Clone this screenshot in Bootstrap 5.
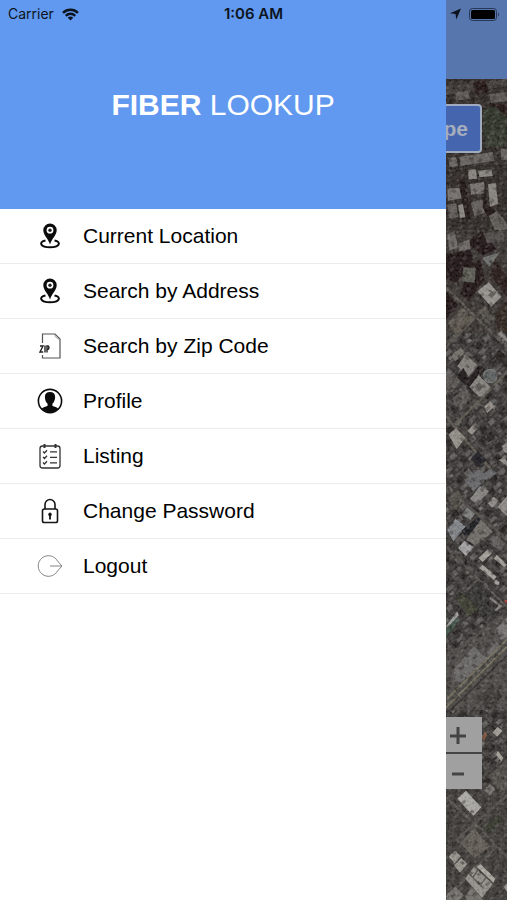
<!DOCTYPE html>
<html lang="en">
<head>
<meta charset="utf-8">
<meta name="viewport" content="width=device-width, initial-scale=1">
<title>Fiber Lookup</title>
<link href="https://cdn.jsdelivr.net/npm/bootstrap@5.3.0/dist/css/bootstrap.min.css" rel="stylesheet">
<style>
body { font-family: "Liberation Sans", Arial, sans-serif; }
.status-bar { font: 14px/28px Inter, "Liberation Sans", sans-serif; color: #0c1420; padding: 0 8px; }
.status-bar .clock { font-size: 15px; font-weight: 600; }
.status-bar .side { flex: 1 1 0; }
.drawer { width: 88%; }
.brand { height: 209px; background: #6199f0; }
.brand-title { font-size: 30px; line-height: 36px; font-weight: 400; }
.menu-item { height: 55px; padding: 0 20px 0 36px; gap: 19px; font-size: 21px; line-height: 28px; color: #000; background: #fff; border-color: #ececec; }
.drawer .menu-item:last-child { border-bottom: 1px solid #ececec; }
.menu-item svg { width: 28px; height: 28px; flex: none; }
.behind { background: #393735; }
.behind-nav { height: 79px; background: #5676ad; flex: none; }
.map { min-height: 0; }
.type-btn { top: 104px; right: 25px; height: 49px; padding: 0 12px; font-size: 21px; font-weight: 700; line-height: 28px; color: #a6aebd; background: #4566ae; border: 2px solid #a1abc0; border-radius: 4px; }
.zoom-ctl { right: 25px; bottom: 111px; width: 48px; gap: 2px; background: #444; }
.zoom-ctl button { height: 35px; background: #a0a0a0; color: #444; border: 0; }
</style>
</head>
<body>
<div class="position-relative d-flex min-vh-100 overflow-hidden">
  <header class="status-bar position-absolute top-0 start-0 w-100 d-flex align-items-center z-3">
    <div class="side d-flex align-items-center gap-2">
      <span>Carrier</span>
      <svg width="17" height="13" viewBox="0 0 17 13" aria-hidden="true"><g fill="none" stroke="#0c1420" stroke-width="2.500"><path d="M1 4.900a10.600 10.600 0 0 1 15 0"/><path d="M3.800 7.800a6.700 6.700 0 0 1 9.400 0"/></g><path d="M8.500 12.600 5.700 9.800a4 4 0 0 1 5.600 0z" fill="#0c1420"/></svg>
    </div>
    <span class="clock">1:06 AM</span>
    <div class="side d-flex align-items-center justify-content-end gap-2">
      <svg width="12" height="12" viewBox="0 0 12 12" aria-hidden="true"><path d="M12 .5 7.300 11.500 6.500 6 1 5.200z" fill="#0c1420"/></svg>
      <svg width="30" height="13" viewBox="0 0 30 13" aria-hidden="true"><rect x=".5" y=".5" width="27" height="12" rx="3" fill="none" stroke="#263855"/><rect x="2" y="2" width="24" height="9" rx="1.500" fill="#000"/><path d="M29 4.500q2 2 0 4z" fill="#263855"/></svg>
    </div>
  </header>

  <aside class="drawer bg-white flex-shrink-0">
    <div class="brand d-flex align-items-center justify-content-center">
      <h1 class="brand-title text-white mb-0"><strong>FIBER</strong> LOOKUP</h1>
    </div>
    <nav class="list-group list-group-flush" aria-label="Main menu">
      <a href="#location" class="menu-item list-group-item d-flex align-items-center"><svg viewBox="0 0 28 28" aria-hidden="true"><path d="M9.500 18.500C2 20 4.500 25.200 14 25.200s12-5.200 4.500-6.700" fill="none" stroke="#0b0b0b" stroke-width="2"/><path fill="#0b0b0b" fill-rule="evenodd" d="M14 22.500C12.500 17 7.300 13 7.300 8.200a6.700 6.700 0 0 1 13.400 0C20.700 13 15.500 17 14 22.500zM14 4.800a3.400 3.400 0 1 0 0 6.800 3.400 3.400 0 0 0 0-6.800z"/><circle cx="14" cy="8.200" r="1.700" fill="#222"/></svg>Current Location</a>
      <a href="#address" class="menu-item list-group-item d-flex align-items-center"><svg viewBox="0 0 28 28" aria-hidden="true"><path d="M9.500 18.500C2 20 4.500 25.200 14 25.200s12-5.200 4.500-6.700" fill="none" stroke="#0b0b0b" stroke-width="2"/><path fill="#0b0b0b" fill-rule="evenodd" d="M14 22.500C12.500 17 7.300 13 7.300 8.200a6.700 6.700 0 0 1 13.400 0C20.700 13 15.500 17 14 22.500zM14 4.800a3.400 3.400 0 1 0 0 6.800 3.400 3.400 0 0 0 0-6.800z"/><circle cx="14" cy="8.200" r="1.700" fill="#222"/></svg>Search by Address</a>
      <a href="#zip" class="menu-item list-group-item d-flex align-items-center"><svg viewBox="0 0 28 28" aria-hidden="true"><path d="M6.500 11V2H19l5 5v19H6.500v-3" fill="none" stroke="#555" stroke-width="1.200"/><path d="M19 2.500v2l4 3" fill="none" stroke="#888" stroke-width=".7"/><path d="M4 14h3l-3 6h3.200M9 13.400V20.600M11 20.600V14h1.200q1.500 1.600 0 3.400H11" fill="none" stroke="#222" stroke-width="1.400"/></svg>Search by Zip Code</a>
      <a href="#profile" class="menu-item list-group-item d-flex align-items-center"><svg viewBox="0 0 28 28" aria-hidden="true"><circle cx="14" cy="14" r="11.600" fill="#fff" stroke="#0b0b0b" stroke-width="1.600"/><path fill="#0b0b0b" d="M14 5c3.500 0 5.300 2 5.100 5.400-.1 3-1.300 5.200-2.700 6.400v2c2 1.200 4.600 1.300 6 2.900a11.600 11.600 0 0 1-16.800 0c1.400-1.600 4-1.700 6-2.900v-2c-1.400-1.200-2.600-3.400-2.700-6.400C8.700 7 10.500 5 14 5z"/></svg>Profile</a>
      <a href="#listing" class="menu-item list-group-item d-flex align-items-center"><svg viewBox="0 0 28 28" aria-hidden="true"><g fill="none" stroke="#333" stroke-width="1.300"><rect x="4" y="4" width="20" height="22" rx="2.500"/><path d="M8.500 2v4M19.500 2v4" stroke-width="2"/><path d="m7 9.500 1.500 1.500L11 8.300M7 15l1.500 1.500L11 13.800M7 20.500 8.500 22l2.500-2.700M14 9.800h7M14 15.300h7M14 20.800h7"/></g></svg>Listing</a>
      <a href="#password" class="menu-item list-group-item d-flex align-items-center"><svg viewBox="0 0 28 28" aria-hidden="true"><g fill="none" stroke="#161616" stroke-width="1.600"><rect x="6.500" y="12" width="15" height="13.500" rx="1.800"/><path d="M9 12V7.500a5 5 0 0 1 10 0V12"/></g><path d="M14 15.500a1.900 1.900 0 0 1 .9 3.500v3.500h-1.800V19a1.900 1.900 0 0 1 .9-3.500z" fill="#111"/></svg>Change Password</a>
      <a href="#logout" class="menu-item list-group-item d-flex align-items-center"><svg viewBox="0 0 28 28" aria-hidden="true"><g fill="none" stroke="#858585" stroke-width="1"><path d="M21.500 9A10.300 10.300 0 1 0 21.500 19"/><path d="M14 14h12M21.500 9 26 14l-4.500 5"/></g></svg>Logout</a>
    </nav>
  </aside>

  <main class="behind position-relative d-flex flex-column flex-grow-1 overflow-hidden">
    <div class="behind-nav"></div>
    <div class="map position-relative flex-grow-1">
      <svg class="position-absolute top-0 start-0 w-100 h-100" viewBox="446 79 61 821" preserveAspectRatio="xMinYMin slice" role="img" aria-label="Satellite map">
        <defs>
          <pattern id="blocks" width="26" height="22" patternUnits="userSpaceOnUse" patternTransform="rotate(-42)">
            <rect width="26" height="22" fill="#353331"/>
            <path d="M2 2h7v5H2zM15 10h8v4h-8z" fill="#5b5957"/><path d="M11 2h4v5h-4zM2 10h5v8H2z" fill="#474442"/><path d="M17 2h7v5h-7zM9 10h4v7H9z" fill="#221f1e"/><path d="M15 16h4v3h-4z" fill="#6c6a67"/><path d="M0 20.500h26" stroke="#45423f" stroke-width="1.500"/>
          </pattern>
          <pattern id="roofs" width="17" height="13" patternUnits="userSpaceOnUse" patternTransform="rotate(-40)">
            <path d="M1 1h4v3H1zM9 7h5v2H9z" fill="#8a8680" opacity=".35"/><path d="M7 1h5v3H7zM2 7h3v4H2z" fill="#14100f" opacity=".45"/><path d="M13 2h2v3h-2zM6 9h2v2H6z" fill="#a5a09a" opacity=".3"/>
          </pattern>
          <filter id="grain" x="0" y="0" width="100%" height="100%"><feTurbulence type="fractalNoise" baseFrequency=".4" numOctaves="2" seed="8"/><feColorMatrix values="1 0 0 0 -.28  1 0 0 0 -.29  1 0 0 0 -.3  0 0 0 0 1"/></filter>
        </defs>
        <rect x="446" y="79" width="61" height="821" fill="url(#blocks)"/>
        <!-- dense downtown blocks -->
        <g transform="translate(430 0) scale(.3333)">
          <path d="M48 237h183v453H48z" fill="#2c2623"/>
          <path d="M48 258 231 237v22L48 284z" fill="#3d3835"/>
          <path d="m76 278 38-6 6 24-40 6zM178 282l53-6v28l-48 4z" fill="#5c5653"/>
          <path d="m128 250 36-12 14 38-38 8zM176 308l55 8v56l-36-6z" fill="#1e1110"/>
          <path d="m160 330 34-12 37 34v54l-44 24-27-18z" fill="#2a3024"/>
          <path d="m166 400 40-20 25 20v40h-65z" fill="#31362a"/>
          <path d="m54 474 24-4 6 28-25 4zM88 470l100-14 6 26-102 16zM212 446h19v34h-18z" fill="#66625f"/>
          <path d="m114 510 24-2 3 28-25 2zM144 512l40-4 4 20-40 4z" fill="#8b8782"/>
          <path d="m52 566 46-4 4 32-48 8zM120 552l42-6 5 34-44 4z" fill="#777270"/>
          <path d="m174 553 24-4 6 62-24 10zM84 616l22-6 8 40-24 4z" fill="#8b8782"/>
          <path d="m52 612 26-2 8 42-30 2zM122 606l38-8 14 38-42 12z" fill="#605b58"/>
          <path d="m84 540 22-2 16 120-14 2zM166 540l6 74 34 24-8 52-40-66z" fill="#1b1211"/>
          <path d="m176 648 26-16 29 40v18h-38z" fill="#5c5853"/>
        </g>
        <g transform="translate(430 230) scale(.3333)">
          <path d="M48 0h183v310H48z" fill="#37322f"/>
          <path d="m48 72 74-12 12 44-56 54-30-10zM110 38l44-36 46 56-42 18zM118 108l34-18 12 60-48 64-24-24zM48 184l36 40-36 44z" fill="#1b0f10"/>
          <path d="m196 90 35 50v58l-52-62z" fill="#231614"/>
          <path d="m194 252 37-42v100l-26-10z" fill="#2b221b"/>
          <path d="M52 14 74 4l10 48-26 10zM84 42l34-14 4 28-34 8z" fill="#6c6866"/>
          <path d="m160 10 62-10 2 36-52 4z" fill="#4b4846"/>
          <path d="m100 112 38 2-4 44-38-4z" fill="#595a52"/>
          <path d="m156 84 54-18-32 44z" fill="#6c6f6d"/>
          <path d="m142 184 34-28 38 44-30 30z" fill="#9b9893"/>
          <path d="m168 176 14 10-8 10 10 8 10-8-8-14z" fill="#625e59"/>
          <path d="m54 280 42-48 34 30-54 52z" fill="#5b554d"/>
          <path d="m146 242 16-14 30 36-20 20z" fill="#514d48"/>
          <path d="m48 174 183 178M48 352 166 230" stroke="#57514b" stroke-width="8" fill="none"/>
          <path d="m204 312 10-10 18 24v12z" fill="#8a8785"/>
          <path d="m82 408 24-34 38 32-30 36z" fill="#85817c"/><path d="m64 378 28-26 12 16-28 26z" fill="#77736d"/>
          <path d="m78 440 22-26 18 30 32-40 16 14-42 62z" fill="#1c1415"/>
          <path d="m118 472 28-38 38 40-30 32z" fill="#8c8884"/><path d="m132 470 16-14 12 14-14 16z" fill="#5a5653"/>
          <circle cx="181" cy="438" r="20" fill="#5b6060" stroke="#777b79" stroke-width="4"/>
          <path d="m190 382 18-24 23 24v32z" fill="#241f1d"/>
          <path d="m48 440 22-14 20 26-26 38-16-6zM66 506l40-34 20 28-38 42z" fill="#56534f"/>
          <path d="m80 580 151-154M48 560 150 680l34 40" stroke="#5c574f" stroke-width="8" fill="none"/>
          <path d="m162 530 18-16 14 14-22 22zM56 614l20-20 30 30-26 34zM112 602l16-16 14 10-16 18z" fill="#99948e"/>
          <path d="m122 688 22-24 24 24-14 24z" fill="#1b1a20"/><path d="m156 622 24-22 20 14-24 24z" fill="#272422"/>
          <path d="m216 648 15-12v34l-10-6zM206 690l16-10 9 14v14z" fill="#918d88"/>
        </g>
        <!-- mid-rise blocks and rail yard -->
        <g transform="translate(430 470) scale(.3333)">
          <path d="m104 34 26-34h20l26 22-46 42zM162 10l18-14 22 12-24 18z" fill="#66676a"/>
          <path d="m120 86 30-38 28 16-38 38z" fill="#8b8986"/>
          <path d="m54 84 30-24 20 28-28 34z" fill="#514e47"/>
          <path d="m96 134 16-24 28 14-18 26z" fill="#808281"/>
          <path d="m52 180 24-34 32 24-38 44z" fill="#85898e"/>
          <path d="m94 182 54-44 18 12-60 50z" fill="#17181e"/>
          <path d="m108 210 46-64 34 40-52 40z" fill="#706c68"/>
          <path d="m84 234 20-22 26 20-22 26z" fill="#aaa9ab"/>
          <path d="m174 100 16-20 16 12-20 22zM202 112l29-34v60z" fill="#95908c"/>
          <path d="m48 52 183 158M48 228 186 370l45 42" stroke="#4e4a46" stroke-width="9" fill="none"/>
          <path d="m146 264 28-26 12 12-28 26zM192 266l8-12 31 30-8 8zM148 294l10-10 42 36-8 10zM190 338l8-8 12 8-6 8z" fill="#aaa6a0"/>
          <path d="m178 220 22-24 28 24-18 20z" fill="#5e5b59"/>
          <path d="m100 374 46-42 82 80-46 42z" fill="#302f2d"/><path d="m100 366 46-38 82 80" fill="none" stroke="#55524e" stroke-width="4"/>
          <path d="m80 388 20-18 46 48-32 22z" fill="#3a3c2e"/>
          <path d="m180 384 32 24-16 14" fill="none" stroke="#86847e" stroke-width="7"/>
          <path d="m50 466 32-42 4 12-34 40z" fill="#a5a6a2"/><path d="m48 474 38-34v14l-38 46z" fill="#3d5347"/>
          <path d="M48 556 231 420v300H48z" fill="#4a4845"/>
          <path d="m70 600 62-72 28 30 42-44 8 22-114 100-20-4z" fill="#696866"/>
          <path d="m202 474 29-32v58l-20 10z" fill="#777574"/>
          <path d="M48 712 231 530M48 690 231 508" stroke="#77705e" stroke-width="5" fill="none"/>
          <path d="M62 720 231 556" stroke="#2d2b29" stroke-width="5" fill="none"/>
          <path d="m138 690 48-44 34 30-40 44z" fill="#393634"/>
          <path d="M224 390h7v9h-7z" fill="#a33b35"/>
        </g>
        <!-- warehouse district -->
        <g transform="translate(430 700) scale(.3333)">
          <path d="M48 250h183v350H48z" fill="#3c3a37"/>
          <path d="m188 98 14-18 16 12-16 18zM198 164l6-12 16 22-6 10z" fill="#aaa49d"/>
          <path d="m156 112 10-18 6 8-10 22z" fill="#835138"/>
          <path d="m162 270 18-18 16 16-18 20z" fill="#77736f"/>
          <path d="m176 228 54-50v90l-20 8z" fill="#514e49"/>
          <path d="m82 296 26-24 46 50-24 26z" fill="#b2b1ac"/><path d="m116 340 10-8 6 6" stroke="#77736d" stroke-width="3" fill="none"/>
          <path d="m48 292 96 88 87 90M74 424 231 286M48 594 198 442" stroke="#534f4b" stroke-width="8" fill="none"/>
          <path d="m90 428 42-44 48 56-48 34z" fill="#625d56"/>
          <path d="m160 386 44-42 16 14-44 42z" fill="#34372b"/>
          <path d="m56 470 18-18 18 16-18 22zM72 496l22-22 18 18-22 26z" fill="#9d9992"/>
          <path d="m106 536 26-36 56 52-32 42z" fill="#989690"/><path d="m140 500 12-8 44 44-6 12z" fill="#b0ada6"/><path d="m118 522 42 42m-16-54-16 24m40-2-18 24" stroke="#56534f" stroke-width="4" fill="none"/>
          <path d="m50 584 26-24 26 26-14 14H50zM106 588l20-26 34 38h-50z" fill="#75716d"/>
          <path d="m222 560 9-10v26z" fill="#a09d98"/>
        </g>
        <rect x="446" y="79" width="61" height="821" fill="url(#roofs)" opacity=".7"/>
        <rect x="446" y="79" width="61" height="821" filter="url(#grain)" opacity=".15"/>
      </svg>
    </div>
    <button type="button" class="type-btn position-absolute">Type</button>
    <div class="zoom-ctl position-absolute d-flex flex-column" role="group" aria-label="Zoom">
      <button type="button" class="d-flex align-items-center justify-content-center p-0" aria-label="Zoom in"><svg width="18" height="18" viewBox="0 0 18 18" aria-hidden="true"><path d="M9 1v17M1 10h16" stroke="#444" stroke-width="3"/></svg></button>
      <button type="button" class="d-flex align-items-center justify-content-center p-0" aria-label="Zoom out"><svg width="18" height="18" viewBox="0 0 18 18" aria-hidden="true"><path d="M3 11h12" stroke="#444" stroke-width="3"/></svg></button>
    </div>
  </main>
</div>
<script src="https://cdn.jsdelivr.net/npm/bootstrap@5.3.0/dist/js/bootstrap.bundle.min.js"></script>
</body>
</html>
